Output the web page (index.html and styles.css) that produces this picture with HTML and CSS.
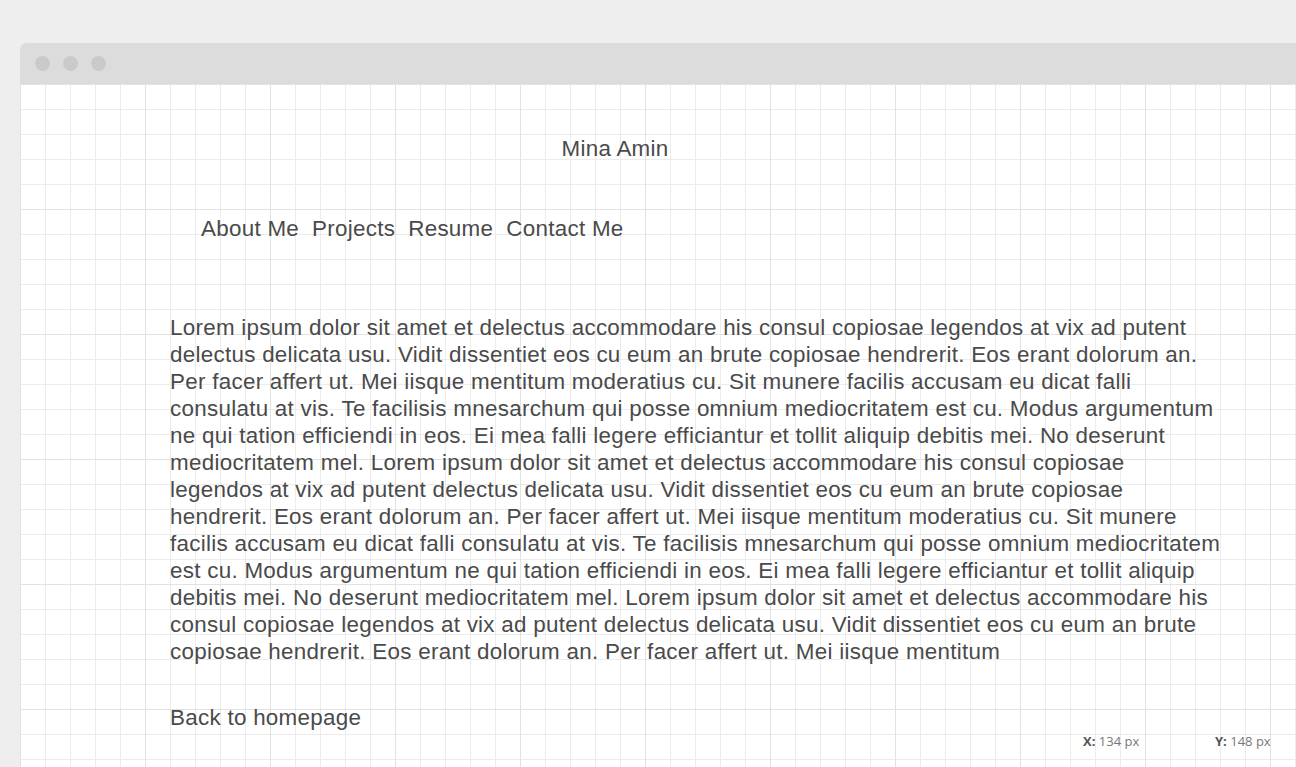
FILE: index.html
```html
<!DOCTYPE html>
<html lang="en">
<head>
<meta charset="utf-8">
<title>Mina Amin</title>
<link rel="stylesheet" href="styles.css">
</head>
<body>
<div class="window">
  <div class="titlebar">
    <span class="dot"></span><span class="dot"></span><span class="dot"></span>
  </div>
  <div class="page">
    <header class="site-title">Mina Amin</header>
    <nav class="nav">
      <a href="#">About Me</a>
      <a href="#">Projects</a>
      <a href="#">Resume</a>
      <a href="#">Contact Me</a>
    </nav>
    <p class="body-text">Lorem ipsum dolor sit amet et delectus accommodare his consul copiosae legendos at vix ad putent delectus delicata usu. Vidit dissentiet eos cu eum an brute copiosae hendrerit. Eos erant dolorum an. Per facer affert ut. Mei iisque mentitum moderatius cu. Sit munere facilis accusam eu dicat falli consulatu at vis. Te facilisis mnesarchum qui posse omnium mediocritatem est cu. Modus argumentum ne qui tation efficiendi in eos. Ei mea falli legere efficiantur et tollit aliquip debitis mei. No deserunt mediocritatem mel. Lorem ipsum dolor sit amet et delectus accommodare his consul copiosae legendos at vix ad putent delectus delicata usu. Vidit dissentiet eos cu eum an brute copiosae hendrerit. Eos erant dolorum an. Per facer affert ut. Mei iisque mentitum moderatius cu. Sit munere facilis accusam eu dicat falli consulatu at vis. Te facilisis mnesarchum qui posse omnium mediocritatem est cu. Modus argumentum ne qui tation efficiendi in eos. Ei mea falli legere efficiantur et tollit aliquip debitis mei. No deserunt mediocritatem mel. Lorem ipsum dolor sit amet et delectus accommodare his consul copiosae legendos at vix ad putent delectus delicata usu. Vidit dissentiet eos cu eum an brute copiosae hendrerit. Eos erant dolorum an. Per facer affert ut. Mei iisque mentitum</p>
    <a class="back" href="#">Back to homepage</a>
    <div class="coords">
      <span class="coord"><b>X:</b> 134 px</span>
      <span class="coord"><b>Y:</b> 148 px</span>
    </div>
  </div>
</div>
</body>
</html>
```

FILE: styles.css
```css
html, body {
  margin: 0;
  padding: 0;
  background: #eeeeee;
  overflow: hidden;
  height: 100%;
}

.window {
  margin: 43px 0 0 20px;
  border-radius: 6px 0 0 0;
  overflow: hidden;
  background: #ffffff;
  height: 724px;
  position: relative;
}

.titlebar {
  height: 41px;
  background: #dcdcdc;
  display: flex;
  align-items: center;
  gap: 13px;
  padding-left: 15px;
}

.dot {
  width: 15px;
  height: 15px;
  border-radius: 50%;
  background: #cacaca;
}

.page {
  position: relative;
  height: 683px;
  box-sizing: border-box;
  padding: 51px 0 0 150px;
  font-family: "Liberation Sans", Arial, sans-serif;
  font-size: 22.4px;
  line-height: 27px;
  letter-spacing: 0.28px;
  color: #4a4a4a;
  background-color: #ffffff;
  background-image:
    linear-gradient(to right, #e2e2e2 1px, transparent 1px),
    linear-gradient(to bottom, #e2e2e2 1px, transparent 1px),
    linear-gradient(to right, #ececec 1px, transparent 1px),
    linear-gradient(to bottom, #ececec 1px, transparent 1px);
  background-size: 125px 125px, 125px 125px, 25px 25px, 25px 25px;
  background-position: 0 0;
}

.site-title {
  width: 890px;
  text-align: center;
}

.nav {
  display: flex;
  gap: 13px;
  margin: 53px 0 0 31px;
}

.nav a,
.back {
  color: #4a4a4a;
  text-decoration: none;
}

.body-text {
  margin: 72px 0 0 0;
  width: 1051px;
}

.back {
  display: block;
  margin-top: 39px;
}

.coords {
  position: absolute;
  left: 1063px;
  top: 648px;
  display: flex;
  font-family: "Open Sans", sans-serif;
  font-size: 13px;
  line-height: 18px;
  letter-spacing: 0;
  color: #777777;
}

.coord {
  width: 132px;
}

.coord b {
  color: #555555;
  font-weight: 700;
}
```
